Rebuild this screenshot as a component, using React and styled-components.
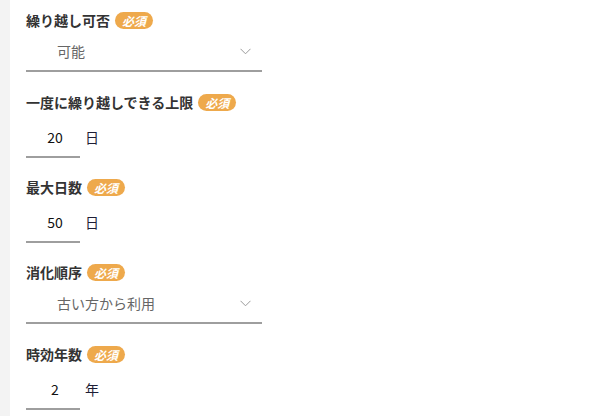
import React from "react";
import styled, { createGlobalStyle } from "styled-components";

const Global = createGlobalStyle`
  html, body { margin: 0; padding: 0; background: #fff; }
  body { font-family: "Noto Sans CJK JP", "Noto Sans", sans-serif; }
`;

const Page = styled.div`
  display: flex;
  width: 596px;
  height: 416px;
  overflow: hidden;
`;

const Strip = styled.div`
  width: 10px;
  flex: none;
  background: #f3f3f3;
`;

const Form = styled.div`
  display: flex;
  flex-direction: column;
  padding: 10px 0 0 16px;
`;

const Field = styled.div`
  display: flex;
  flex-direction: column;
  margin-bottom: ${(p) => p.$mb}px;
`;

const LabelRow = styled.div`
  display: flex;
  align-items: center;
  gap: 5px;
  height: 20px;
`;

const Label = styled.span`
  font-size: 14px;
  font-weight: 700;
  color: #333;
  line-height: 20px;
`;

const Badge = styled.span`
  display: inline-flex;
  align-items: center;
  height: 17px;
  padding: 0 7px;
  border-radius: 9px;
  background: #eea94c;
  color: #fff;
  font-size: 12px;
  font-weight: 700;
  font-style: italic;
  line-height: 17px;
`;

const Select = styled.div`
  display: flex;
  align-items: center;
  justify-content: space-between;
  box-sizing: border-box;
  width: 236px;
  height: 40px;
  margin-top: 2px;
  padding: 0 11px 0 31px;
  border-bottom: 2px solid #9e9e9e;
  font-size: 14px;
  color: #666;
`;

const InputRow = styled.div`
  display: flex;
  align-items: center;
  gap: 5px;
  margin-top: 6px;
`;

const Input = styled.div`
  box-sizing: border-box;
  width: 54px;
  height: 40px;
  display: flex;
  align-items: center;
  justify-content: center;
  padding-left: 4px;
  border-bottom: 2px solid #9e9e9e;
  font-size: 14px;
  color: #111;
`;

const Unit = styled.span`
  font-size: 14px;
  color: #1e1e36;
  margin-top: -2px;
`;

const Chevron = () => (
  <svg width="11" height="7" viewBox="0 0 11 7" fill="none">
    <path d="M0.5 0.8 L5.5 5.8 L10.5 0.8" stroke="#9a9a9a" strokeWidth="1" />
  </svg>
);

const fields = [
  { label: "繰り越し可否", type: "select", value: "可能", mb: 20 },
  { label: "一度に繰り越しできる上限", type: "input", value: "20", unit: "日", mb: 19 },
  { label: "最大日数", type: "input", value: "50", unit: "日", mb: 19 },
  { label: "消化順序", type: "select", value: "古い方から利用", mb: 20 },
  { label: "時効年数", type: "input", value: "2", unit: "年", mb: 0 },
];

export default function App() {
  return (
    <Page>
      <Global />
      <Strip />
      <Form>
        {fields.map((f) => (
          <Field key={f.label} $mb={f.mb}>
            <LabelRow>
              <Label>{f.label}</Label>
              <Badge>必須</Badge>
            </LabelRow>
            {f.type === "select" ? (
              <Select>
                <span>{f.value}</span>
                <Chevron />
              </Select>
            ) : (
              <InputRow>
                <Input>{f.value}</Input>
                <Unit>{f.unit}</Unit>
              </InputRow>
            )}
          </Field>
        ))}
      </Form>
    </Page>
  );
}
